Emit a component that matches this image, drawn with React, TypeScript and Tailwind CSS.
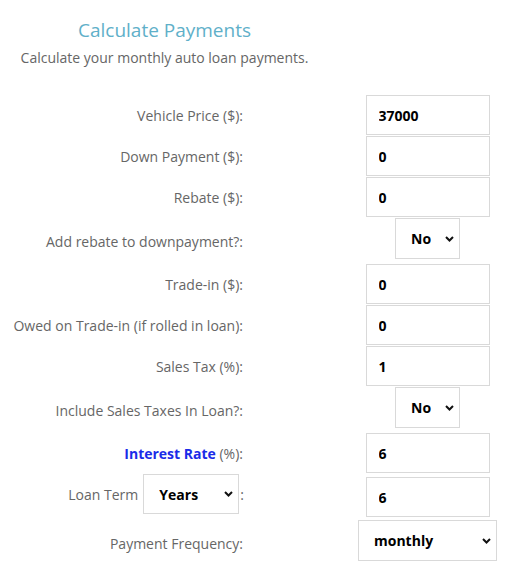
import type { ReactNode } from "react";

const Chevron = () => (
    <svg width="9" height="6" viewBox="0 0 9 6" className="pointer-events-none absolute right-[5px] top-1/2 -translate-y-1/2">
        <path d="M1 1 L4.5 4.5 L8 1" fill="none" stroke="#111" strokeWidth="2" />
    </svg>
);

const Select = ({ value, w, h = "h-[41px]" }: { value: string; w: string; h?: string }) => (
    <div className={`relative ${w} ${h} bg-white border border-[#d9d9d9]`}>
        <select
            defaultValue={value}
            className="appearance-none w-full h-full bg-transparent pl-[15px] pr-6 text-[14px] font-bold text-black outline-none"
        >
            <option>{value}</option>
        </select>
        <Chevron />
    </div>
);

const NumInput = ({ value, mt = "" }: { value: string; mt?: string }) => (
    <input
        defaultValue={value}
        className={`w-[124px] h-[40px] border border-[#d9d9d9] bg-white pl-[12px] text-[14px] font-bold text-black outline-none ${mt}`}
    />
);

const Row = ({ label, h, children }: { label: ReactNode; h: string; children: ReactNode }) => (
    <div className={`flex ${h}`}>
        <div className="w-[243px] flex items-center justify-end text-right">{label}</div>
        <div className="ml-[114px] w-[141px] flex justify-center items-start">{children}</div>
    </div>
);

const App = () => {
    return (
        <div className="w-[517px] h-[566px] bg-white overflow-hidden font-['Open_Sans',sans-serif] text-[14px] text-[#666]">

            <div className="w-[329px] text-center pt-[17px]">
                <h2 className="text-[19px] leading-[26px] text-[#5fb0c9] font-medium">Calculate Payments</h2>
                <p className="mt-[5px] leading-[20px]">Calculate your monthly auto loan payments.</p>
            </div>

            <div className="mt-[27px]">
                <Row label="Vehicle Price ($):" h="h-[41px]"><NumInput value="37000" /></Row>
                <Row label="Down Payment ($):" h="h-[41px]"><NumInput value="0" /></Row>
                <Row label="Rebate ($):" h="h-[41px]"><NumInput value="0" /></Row>
                <Row label="Add rebate to downpayment?:" h="h-[46px]"><Select value="No" w="w-[65px]" /></Row>
                <Row label="Trade-in ($):" h="h-[41px]"><NumInput value="0" /></Row>
                <Row label="Owed on Trade-in (if rolled in loan):" h="h-[41px]"><NumInput value="0" /></Row>
                <Row label="Sales Tax (%):" h="h-[41px]"><NumInput value="1" /></Row>
                <Row label="Include Sales Taxes In Loan?:" h="h-[46px]"><Select value="No" w="w-[65px]" /></Row>
                <Row
                    label={<span><b className="text-[#1a2be8]">Interest Rate</b> (%):</span>}
                    h="h-[41px]"
                >
                    <NumInput value="6" />
                </Row>
                <div className="flex h-[46px]">
                    <div className="w-[244px] h-[40px] flex items-center justify-end">
                        <span>Loan Term</span>
                        <span className="ml-[5px]"><Select value="Years" w="w-[96px]" h="h-[40px]" /></span>
                        <span className="ml-[1px]">:</span>
                    </div>
                    <div className="ml-[113px] w-[141px] flex justify-center items-start">
                        <NumInput value="6" mt="mt-[3px]" />
                    </div>
                </div>
                <Row label="Payment Frequency:" h="h-[46px]"><Select value="monthly" w="w-[139px]" /></Row>
            </div>

        </div>
    )
}

export default App
